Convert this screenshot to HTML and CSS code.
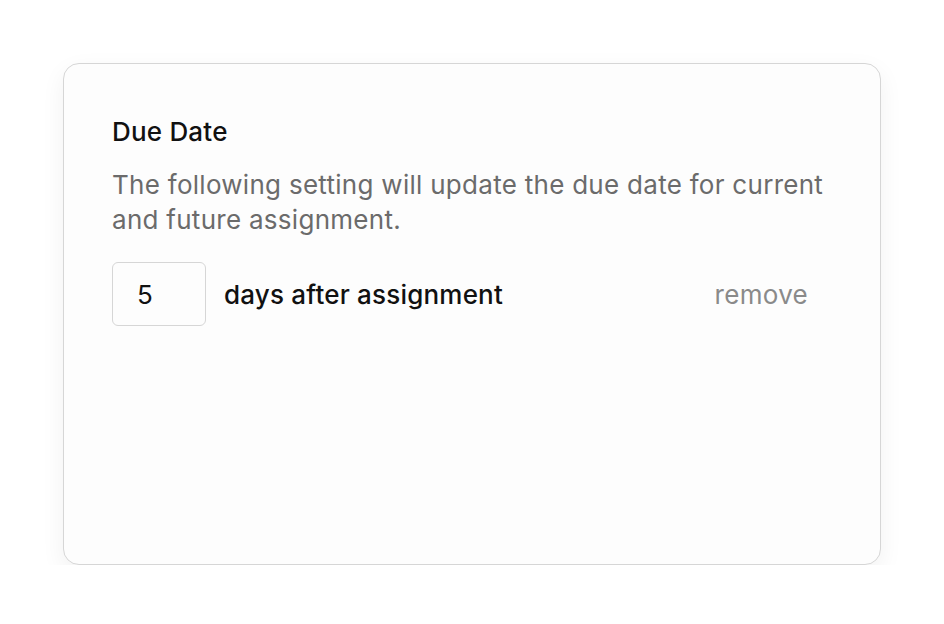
FILE: index.html
```html
<!DOCTYPE html>
<html lang="en">

<head>
	<meta charset="UTF-8">
	<meta name="viewport" content="width=device-width, initial-scale=1.0">
	<title>Due Date</title>
	<link rel="stylesheet" href="styles.css">
</head>

<body>
	<div class="page">
		<div class="card">
			<h2 class="title">Due Date</h2>
			<p class="desc">The following setting will update the due date for current and future assignment.</p>
			<div class="row">
				<input class="days-input" type="text" value="5">
				<span class="label">days after assignment</span>
				<a class="remove" href="#">remove</a>
			</div>
		</div>
	</div>
</body>

</html>
```

FILE: styles.css
```css
* {
	box-sizing: border-box;
}

body {
	margin: 0;
	background: #fff;
	font-family: Inter, "Noto Sans", sans-serif;
}

.page {
	padding: 63px 63px 0 63px;
}

.card {
	width: 818px;
	height: 502px;
	padding: 48px 48px;
	background: #fdfdfd;
	border: 1px solid #d6d6d6;
	border-radius: 16px;
	box-shadow: 0 8px 24px rgba(0, 0, 0, 0.06);
}

.title {
	margin: 0;
	font-size: 26px;
	font-weight: 500;
	line-height: 40px;
	letter-spacing: 0.2px;
	color: #111;
}

.desc {
	margin: 15px 0 0;
	font-size: 26px;
	line-height: 35px;
	letter-spacing: 0.28px;
	color: #6b6b6b;
	max-width: 720px;
}

.row {
	display: flex;
	align-items: center;
	margin-top: 25px;
	padding-right: 24px;
}

.days-input {
	width: 94px;
	height: 64px;
	padding: 0 24px;
	border: 1px solid #d6d6d6;
	border-radius: 6px;
	background: #fdfdfd;
	font-family: inherit;
	font-size: 26px;
	color: #111;
}

.label {
	margin-left: 18px;
	font-size: 26px;
	font-weight: 500;
	letter-spacing: 0.2px;
	color: #111;
}

.remove {
	margin-left: auto;
	font-size: 26px;
	letter-spacing: 0.3px;
	color: #8a8a8a;
	text-decoration: none;
}
```
